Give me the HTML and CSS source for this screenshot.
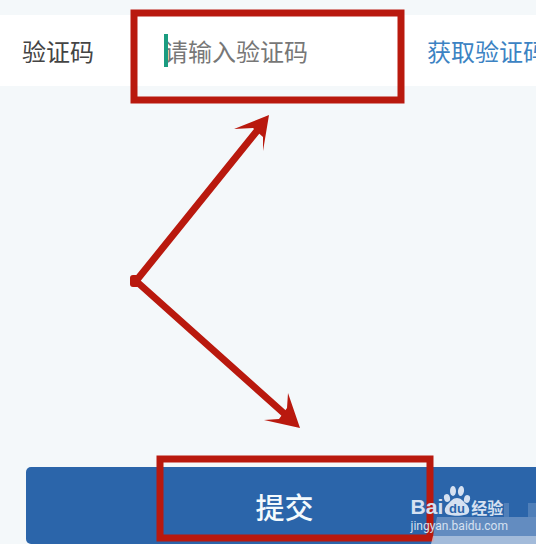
FILE: index.html
```
<!DOCTYPE html>
<html lang="zh-CN">
<head>
    <meta charset="UTF-8">
    <meta name="viewport" content="width=device-width, initial-scale=1.0">
    <title>验证码</title>
    <link rel="stylesheet" href="styles.css">
</head>
<body>
    <form class="verify-form">
        <div class="code-row">
            <label class="code-label" for="code">验证码</label>
            <div class="code-field">
                <input class="code-input" id="code" type="text" placeholder="请输入验证码">
                <span class="caret"></span>
            </div>
            <button class="get-code-btn" type="button">获取验证码</button>
        </div>
        <button class="submit-btn" type="submit">提交</button>
    </form>

    <!-- 标注：红框和箭头 -->
    <svg class="marks" width="536" height="544" viewBox="0 0 536 544" aria-hidden="true">
        <g fill="none" stroke="#b9190e" stroke-width="7">
            <rect x="134" y="13" width="267" height="87"/>
            <rect x="160" y="459" width="270" height="79"/>
            <path d="M136 281L261 126M136 281L288 417"/>
        </g>
        <g fill="#b9190e">
            <rect x="130" y="275" width="10" height="12" rx="3"/>
            <path d="M269 115L234 129L253 128L263 137L263 151Z"/>
            <path d="M300 428L288 393L287 408L279 419L264 420Z"/>
        </g>
        <g fill="#e3e9f4">
            <path d="M437 517H536V536H433Z" opacity="0.3"/>
            <path d="M433 536H536V544H431Z" opacity="0.65"/>
            <path d="M504 503H509V517H504ZM528 503H536V517H528Z" opacity="0.2"/>
        </g>
    </svg>

    <!-- 水印 -->
    <div class="watermark">
        <div class="brand">
            <span class="brand-name">Bai</span>
            <svg class="paw" width="28" height="30" viewBox="0 0 28 30">
                <g fill="currentColor">
                    <ellipse cx="4" cy="12" rx="3" ry="4" transform="rotate(-15 4 12)"/>
                    <ellipse cx="10" cy="5" rx="3" ry="5"/>
                    <ellipse cx="18" cy="5" rx="3" ry="5" transform="rotate(8 18 5)"/>
                    <ellipse cx="24" cy="13" rx="3" ry="4" transform="rotate(15 24 13)"/>
                    <path d="M14 12C18 12 20 15 23 18C28 22 27 29 21 29C18 30 10 30 7 29C1 29 0 22 5 18C8 15 10 12 14 12Z"/>
                </g>
                <text class="paw-text" x="14" y="27" text-anchor="middle">du</text>
            </svg>
            <span class="brand-sub">经验</span>
        </div>
        <div class="site">jingyan.baidu.com</div>
    </div>
</body>
</html>
```
FILE: styles.css
```
* {
    box-sizing: border-box;
}

body {
    position: relative;
    min-height: 100vh;
    margin: 0;
    overflow: hidden;
    background-color: #f4f8fa;
    font-family: "Noto Sans CJK SC", sans-serif;
}

button,
input {
    padding: 0;
    border: none;
    background: none;
    font-family: inherit;
}

.verify-form {
    display: flex;
    flex-direction: column;
    justify-content: space-between;
    min-height: 100vh;
    padding-top: 15px;
}

/* 验证码一行 */
.code-row {
    display: flex;
    align-items: center;
    height: 71px;
    padding-left: 22px;
    background-color: #fff;
    font-size: 24px;
}

.code-label {
    width: 142px;
    color: #444;
}

.code-field {
    position: relative;
    flex: 1;
    min-width: 0;
}

.code-input {
    display: block;
    width: 100%;
    height: 36px;
    color: #444;
    font-size: 24px;
    outline: none;
}

.code-input::placeholder {
    color: #777;
    opacity: 1;
}

.caret {
    position: absolute;
    top: 1px;
    left: 0;
    width: 4px;
    height: 33px;
    background-color: #1b9c80;
}

.get-code-btn {
    flex: none;
    width: 109px;
    overflow: hidden;
    color: #3c83c3;
    font-size: 24px;
    text-align: left;
    white-space: nowrap;
}

/* 提交按钮，右侧超出屏幕 */
.submit-btn {
    height: 77px;
    margin-left: 26px;
    margin-right: -7px;
    border-radius: 5px;
    background-color: #2b65aa;
    color: #f4fafd;
    font-size: 29px;
    font-weight: 500;
}

.marks {
    position: absolute;
    top: 0;
    left: 0;
    pointer-events: none;
}

/* 水印 */
.watermark {
    position: absolute;
    right: 28px;
    bottom: 10px;
    color: #d6e1f1;
}

.brand {
    display: flex;
    align-items: flex-end;
    height: 30px;
    margin-bottom: 2px;
}

.brand-name {
    font-family: "Liberation Sans", Arial, sans-serif;
    font-size: 21px;
    font-weight: bold;
    line-height: 18px;
}

.paw-text {
    fill: #2b65aa;
    font-family: "Liberation Sans", Arial, sans-serif;
    font-size: 13px;
    font-weight: bold;
}

.brand-sub {
    font-size: 16px;
    font-weight: bold;
    line-height: 18px;
}

.site {
    font-family: Roboto, sans-serif;
    font-size: 12px;
    line-height: 16px;
}
```
